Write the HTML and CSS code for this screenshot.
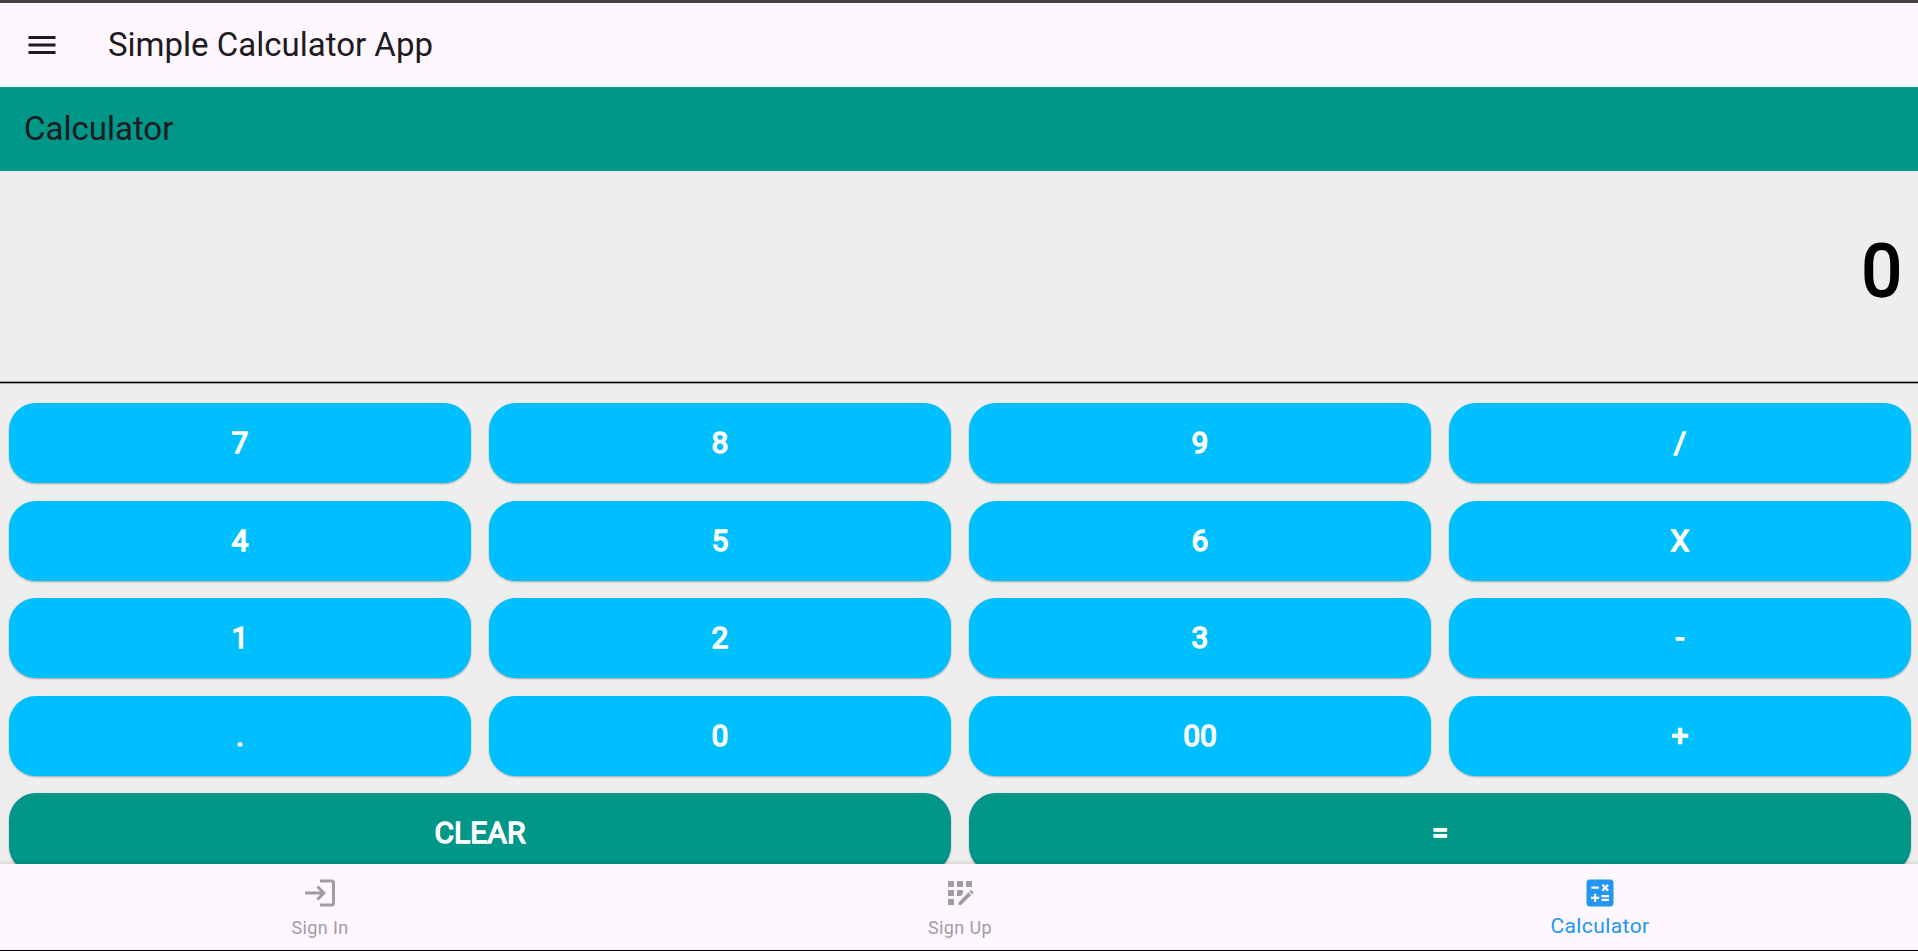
FILE: index.html
```html
<!DOCTYPE html>
<html lang="en">
<head>
<meta charset="utf-8">
<title>Simple Calculator App</title>
<link rel="stylesheet" href="styles.css">
</head>
<body>
<div class="app">
  <header class="app-bar">
    <svg class="icon" viewBox="0 0 24 24"><path d="M3 18h18v-2H3v2zm0-5h18v-2H3v2zm0-7v2h18V6H3z"/></svg>
    <h1 class="title">Simple Calculator App</h1>
  </header>
  <div class="sub-bar"><h2 class="title">Calculator</h2></div>
  <main class="calculator">
    <div class="display"><span class="value">0</span></div>
    <div class="divider"></div>
    <div class="keys">
      <button class="key">7</button><button class="key">8</button><button class="key">9</button><button class="key">/</button>
      <button class="key">4</button><button class="key">5</button><button class="key">6</button><button class="key">X</button>
      <button class="key">1</button><button class="key">2</button><button class="key">3</button><button class="key">-</button>
      <button class="key">.</button><button class="key">0</button><button class="key">00</button><button class="key">+</button>
      <button class="key key-wide">CLEAR</button><button class="key key-wide">=</button>
    </div>
  </main>
  <nav class="bottom-nav">
    <a class="nav-item">
      <svg class="icon" viewBox="0 0 24 24"><path d="M11 7L9.6 8.4l2.6 2.6H2v2h10.2l-2.6 2.6L11 17l5-5-5-5zm9 12h-8v2h8c1.1 0 2-.9 2-2V5c0-1.1-.9-2-2-2h-8v2h8v14z"/></svg>
      <span class="label">Sign In</span>
    </a>
    <a class="nav-item">
      <svg class="icon" viewBox="0 0 24 24"><path d="M10 4h4v4h-4zM4 16h4v4H4zM4 10h4v4H4zM4 4h4v4H4zM14 12.42V10h-4v4h2.42zM20.88 11.29l-1.17-1.17c-.16-.16-.42-.16-.58 0l-.88.88L20 12.75l.88-.88c.16-.16.16-.42 0-.58zM11 18.25V20h1.75l6.67-6.67-1.75-1.75zM16 4h4v4h-4z"/></svg>
      <span class="label">Sign Up</span>
    </a>
    <a class="nav-item nav-active">
      <svg class="icon" viewBox="0 0 24 24"><path d="M19 3H5c-1.1 0-2 .9-2 2v14c0 1.1.9 2 2 2h14c1.1 0 2-.9 2-2V5c0-1.1-.9-2-2-2zm-5.97 4.06L14.09 6l1.41 1.41L16.91 6l1.06 1.06-1.41 1.41 1.41 1.41-1.06 1.06-1.41-1.4-1.41 1.41-1.06-1.06 1.41-1.41-1.41-1.42zm-6.78.66h5v1.5h-5v-1.5zM11.5 16h-2v2H8v-2H6v-1.5h2v-2h1.5v2h2V16zm6.5 1.25h-5v-1.5h5v1.5zm0-2.5h-5v-1.5h5v1.5z"/></svg>
      <span class="label">Calculator</span>
    </a>
  </nav>
</div>
</body>
</html>
```

FILE: styles.css
```css
* { box-sizing: border-box; }
html, body { margin: 0; height: 100%; overflow: hidden; }
body { font-family: Roboto, "Noto Sans", sans-serif; background: #fef7ff; }

.app {
  display: flex;
  flex-direction: column;
  width: 1920px;
  height: 951px;
  border-top: 3px solid #464343;
  border-bottom: 1px solid #000;
}
.icon { display: block; flex: none; width: 36px; height: 36px; fill: currentColor; }
.title { margin: 0; font-size: 33px; font-weight: 400; line-height: 42px; }

.app-bar {
  flex: none;
  display: flex;
  align-items: center;
  gap: 48px;
  height: 84px;
  padding-left: 24px;
  color: #1d1b20;
  background: #fef7ff;
}
.sub-bar {
  flex: none;
  display: flex;
  align-items: center;
  height: 84px;
  padding-left: 24px;
  color: #1d1b20;
  background: #009688;
}

.calculator { flex: 1; min-height: 0; overflow: hidden; background: #eee; }
.display {
  display: flex;
  justify-content: flex-end;
  height: 210px;
  padding: 59px 18px 0 0;
}
.value { font-size: 72px; line-height: 84px; color: #000; -webkit-text-stroke: 2.25px #000; }
.divider { height: 3px; background: #000; border: solid #a0a0a0; border-width: 1px 0; }
.keys {
  display: grid;
  grid-template-columns: repeat(4, 1fr);
  grid-auto-rows: 80px;
  gap: 17.5px 18px;
  padding: 19px 9px 9px;
}
.key {
  border: 0;
  padding: 0;
  border-radius: 27px;
  background: #00bfff;
  color: #fff;
  font: 400 30px/36px Roboto, "Noto Sans", sans-serif;
  -webkit-text-stroke: 1.4px #fff;
  box-shadow: 0 1px 2px rgba(0, 0, 0, .3);
}
.key-wide { grid-column: span 2; background: #009688; }

.bottom-nav {
  flex: none;
  position: relative;
  display: flex;
  height: 86px;
  background: #fef7ff;
  box-shadow: 0 0 5px rgba(0, 0, 0, .2);
}
.nav-item {
  flex: 1;
  display: flex;
  flex-direction: column;
  align-items: center;
  padding-top: 11px;
  color: #9e9e9e;
}
.label { margin-top: 5px; font-size: 18px; line-height: 24px; letter-spacing: .4px; }
.nav-active { color: #2196f3; }
.nav-active .label { margin-top: 3px; font-size: 21px; }
```
